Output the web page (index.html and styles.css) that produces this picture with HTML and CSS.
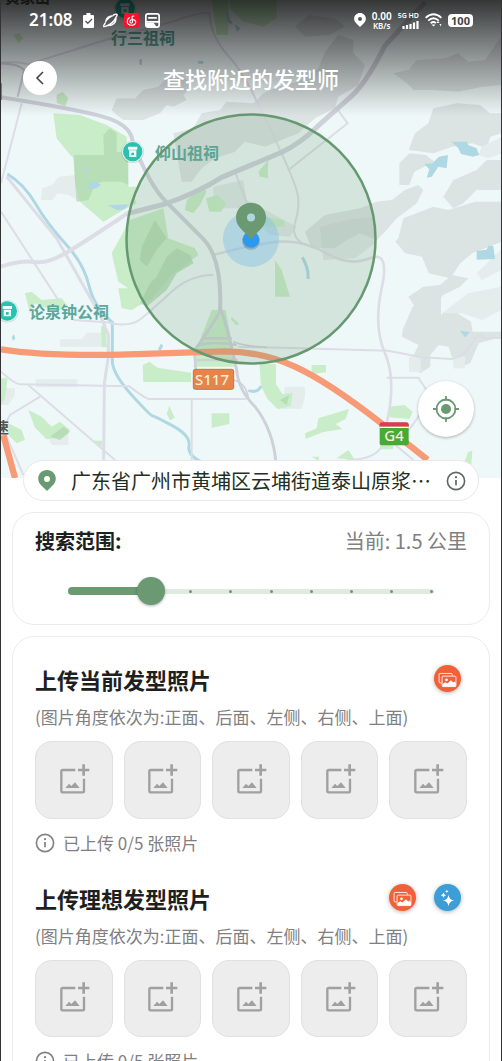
FILE: index.html
```html
<!DOCTYPE html>
<html lang="zh-CN">
<head>
    <meta charset="UTF-8">
    <meta name="viewport" content="width=device-width, initial-scale=1">
    <title>查找附近的发型师</title>
    <link rel="stylesheet" href="styles.css">
</head>
<body>
    <!-- 公用图标 -->
    <svg class="symbols" aria-hidden="true">
        <symbol id="icon-info" viewBox="0 0 20 20">
            <circle cx="10" cy="10" r="8.6" fill="none" stroke="currentColor" stroke-width="1.6"/>
            <path d="M10 9v5.2" stroke="currentColor" stroke-width="1.7"/>
            <circle cx="10" cy="6.2" r="1.1" fill="currentColor"/>
        </symbol>
        <symbol id="icon-pin" viewBox="0 0 18 21">
            <path fill-rule="evenodd" fill="currentColor" d="M9 0C4 0 .2 3.8 .2 8.6c0 2.400 1 4.500 2.700 6.300L9 21l6.100-6.100c1.700-1.800 2.700-3.900 2.700-6.300C17.800 3.800 14 0 9 0zm0 6a3 3 0 1 1 0 6 3 3 0 0 1 0-6z"/>
        </symbol>
        <symbol id="icon-add" viewBox="0 0 96 96">
            <path d="M52 18H14q-4 0-4 4v59q0 4 4 4h60q4 0 4-4V44" fill="none" stroke="currentColor" stroke-width="7"/>
            <path d="M77 1v34M60 18h34" stroke="currentColor" stroke-width="8"/>
            <path d="M22 72l11-13 7 7 11-11 14 17z" fill="currentColor"/>
        </symbol>
        <symbol id="icon-gallery" viewBox="0 0 80 80">
            <path d="M23 53h-5q-3 0-3-3V28q0-3 3-3h33q3 0 3 3v4" fill="none" stroke="#fff" stroke-width="2.500"/>
            <rect x="24" y="33" width="41" height="31" rx="3" fill="none" stroke="#fff" stroke-width="2.500"/>
            <circle cx="37" cy="44" r="4" fill="#fff"/>
            <path d="M25 64V57l8-6 7 4 10-10 7 7 4-3 4 5v8q0 2-2 2z" fill="#fff"/>
        </symbol>
        <symbol id="icon-sparkle" viewBox="0 0 80 80">
            <path fill="#fff" d="M43 32q2 15 17 17q-15 2-17 17q-2-15-17-17q15-2 17-17zM28 25q1 7 8 8q-7 1-8 8q-1-7-8-8q7-1 8-8zM38 17q1 4 5 5q-4 1-5 5q-1-4-5-5q4-1 5-5z"/>
        </symbol>
        <symbol id="icon-temple" viewBox="0 0 70 70">
            <circle cx="35" cy="36" r="34" fill="#000" opacity=".12"/>
            <circle cx="35" cy="35" r="32" fill="#d9f3ef"/>
            <circle cx="35" cy="35" r="29" fill="#2cc0ae"/>
            <path fill-rule="evenodd" d="M21 20h28v9H21zM24 31h22v20H24zM31 38v8h8v-8z" fill="#f2fffc"/>
        </symbol>
    </svg>

    <div class="app">
        <section class="map">
            <svg class="map-canvas" viewBox="1 0 500 478" preserveAspectRatio="xMidYMin slice" role="img" aria-label="地图">
                <rect width="502" height="478" fill="#eff8f8"/>
                <g transform="scale(.333333)">
                    <!-- 山地 -->
                    <g fill="#dce3e3">
                        <path d="M335 330l15-35 55 0 25-25 45-10 25-25h55l20 25-25 25 10 15-40 20-20-5-20 25-50 20-60 0-20-15z"/>
                        <path d="M520 400l60-15 25-45 55-10 20-25 80 5 30-30 45-20 60-15 60-40 20-50 40-50 45 15 0 40 35 35-20 60-60 35-10 35-60 30-50 45-100 40-60-15-30 30-60 20-40 30-30 40-30 0-10-60z"/>
                        <path d="M885 80l40-35 80 10 30 25-50 25-70 5z"/>
                        <path d="M1180 220l45-10 25-30 85-5 40-15 30 25 50-5 45-65h6v140l-60 5-70 15-80-5-55 0-20-20z"/>
                        <path d="M1245 400l40-30 15-45 70-15 70 5 30 25h36v60l-35 10-10 35-45-15-60 10-55 20-75-10z"/>
                        <path d="M1198 490l30-30 50 5 25 20-30 15-30 15-15 40h-30zM1330 590l30-50 70-30 30-30h46v90l-76 0-40 40-30 15z"/>
                        <path d="M1080 625l50-20 45-5 40-30 40-15 15 15-20 40-60 45-30 35-30 30-50-20-40 20-35 25-70 0-20-50 60-50z"/>
                        <path d="M1145 770l50-55 15-60 90-35 45 10 80-25 81 0v120l-90 35-35 30-30 45-65-15-20-50-50-10-30-35z"/>
                        <path d="M1225 890l45-30 50-5 35-30 50 10-25 25-50 25-35 35-45 10zM1208 990l30-70 60-30 25 0 0 55 25-20 65 40 5 30 88 0v15l-70 20-25 60-45 15-20-65-30-5-25 30 0 35-30 20-35-25 30-60-50-25z"/>
                    </g>
                    <g fill="#e4ecec">
                        <path d="M122 600l5-35 30-10 20-25 50-5 5 75-25-15-35-5-15 20z"/>
                        <path d="M1445 440l61-30v50l-40 15-30-10z"/>
                        <path d="M1430 820l76-75v65l-60 30zM1325 940l80-60 101-20v70l-60 30-60-20z"/>
                        <path d="M180 1018h65l15-20h45v42H180zM107 1138h125v24H107zM5 1165h40v20l-20 30H5zM145 1310l60-20v45l-50 0zM855 1160h60v30l-10 36h-60z"/>
                        <path d="M1227 1070h35v45h-35zM1360 1070h35v35h-35z"/>
                    </g>
                    <path d="M960 680l80-20 85-10v80l-60 45-95 5zM640 560l90-20 10 60 150 80-20 30-60-5-90-80-80 0z" fill="#c9d1d1" opacity=".4"/>
                    <!-- 绿地 -->
                    <g fill="#c8edc8">
                        <path d="M160 340l80 5 80 30 60 35 5 150 25 0-10 30 10 20-40 20-60 35-70-60-15-60-5-70-30-35-20-25z"/>
                        <path d="M390 660l70-25 30-10 15 90 80 30 10 20-80 60-60 70-60 35-30-5-10-60 30 0-30-20-20-85z"/>
                        <path d="M560 600l50-40 10 15-20 40-20 25-25-10zM618 595l35-10 25 25-15 25-35 0zM775 515l30-35-2 40 2 15-25-5zM825 780l20 30 25 80h-45z"/>
                        <path d="M790 650l60 10 5 20-60 0zM695 950l22 22-8 4-16-18z"/>
                        <path d="M635 930h42l32 170H580l20-80z"/>
                        <path d="M75 880l20-5 30 25 60-5 20 25-40 15-60-25-15 30zM303 980l15-8 2 70h-15zM428 1095l20-10 25 18 100 15v28H430zM635 1240h53v32l-53 12zM508 1218l16 35-14 8-10-20zM85 1230l40 20 30 30 25-15 30 25-20 20-50 8-35-35zM25 1270l40 20 10 30-25 10-25-25zM278 1322h28v18z"/>
                        <path d="M778 1090l50 3 0 60 20 30 30-5-5 40-40 10-30-30-20-40zM935 1095h43v22l-43 5zM915 1300l35-15 5-30 92-28-10 30-30 15 20 15-60 10-50 20zM1168 1220l45-5 25 20-10 22-60-5zM1010 1375l35-25 20 30zM1395 1380l10-25 12-2-3 40-20 5zM1140 1330h40v18h-40zM935 1370h22v14zM3 1135l20 0-8 60-12 20z"/>
                        <path d="M170 285l18-10 17 20-10 25-25-12zM40 105l18-5 12 15-15 15zM635 0h50v105h-35zM690 0h140l0 55-40 25-60-15-40-40z"/>
                    </g>
                    <g fill="#b2d8b2" opacity=".75">
                        <path d="M222 465h90l-2-60 20-20 20 15v55l35 5v95l-20-10-60 0-20 10-20 45-35 5-5-60zM425 740l40-80 35 55-30 35-30 50-20-20zM500 770l30-25 40 20 10 25-50 30-30 50-60 50-20-10 30-60 20-20z"/>
                        <path d="M150 1310l40-30 20 15-30 25zM840 1200l28-15-8 30z"/>
                    </g>
                    <!-- 水系 -->
                    <path fill="#afd8e4" d="M1355 425l45 0 5 10 25 10 8 20-20 5-35-8-8-17zM1272 492l25-2 20-20 27-5-4 40-25-5-20 30-15 3 8-25zM1430 752l30-3 5-12 15 0 5 40-55 2zM265 552l20-8 18 10-12 10-25 5zM322 616l65-3-15 15-20 3zM250 505l12 0 4 12-12 0zM1380 992l30 5-15 15zM705 72l16 12-10 12zM418 178h8v16h-8zM595 183h15v8h-15zM36 1010l6-8 4 14-8 6z"/>
                    <g fill="none" stroke="#afd8e4">
                        <path d="M22 522q50 30 85 90t90 120 70 125 70 110v120q5 40 60 100t60 60 60 30 50 60 40 50" stroke-width="9"/>
                        <path d="M907 772q20 35 17 65M745 1172q30 8 38-14M478 1050l8-16M682 40l3 20 10 10" stroke-width="9"/>
                    </g>
                    <!-- 道路 -->
                    <g fill="none" stroke="#dcdde6" stroke-width="6">
                        <path d="M3 188q45-5 80 5l240-75 200-55q80-30 105-23 5 70 55 125t90 145"/>
                        <path d="M773 310q40 80 72 150t45 110-5 100 70 75"/>
                        <path d="M3 800q60-20 100-14t100-30 185-120" stroke-width="12"/>
                        <path d="M20 530l150 185 130 230 25 60v65l-12 80-2 230" stroke-width="9"/>
                        <path d="M3 635l175 270M65 310L3 550M705 515l60 160M865 510l178-140-28-38"/>
                        <path d="M640 765q130-35 200-40t140 35 130 15 35 90 10 195 5 210" stroke-width="8"/>
                        <path d="M640 825q-70 0-125 50t-90 80-105 12l-100-7"/>
                        <path d="M3 1115q45 40 60 38l325 6q50 38 60 38h290M575 1195v185M85 1155l260 225M120 1190l-90 55-30 60M715 1040l450 12 100 20 90 5q35-5 60-45t40-18h50M1160 1133h95l40 60-70 100"/>
                        <path d="M20 1310l50 115"/>
                        <path d="M1150 1330q-20 50-110 50M1180 1330l60 50"/>
                    </g>
                    <g fill="none" stroke="#cfd1da" stroke-width="12">
                        <path d="M3 292q220 35 305 58t90 75q50 130 100 180t110 110 52 220"/>
                        <path d="M385 640l110-28q100-35 170-80l180-75q60-30 110-80l90-80q50-40 110-160l120-130" stroke-width="15"/>
                        <path d="M660 935q-55 90-80 120M660 920q25 70 50 190 5 60 55 110 55 70 63 170" stroke-width="9"/>
                        <path d="M610 1015h85M595 1035q50-12 115 0M582 1080h130M583 1055l5 60" stroke-width="8"/>
                        <path d="M3 190q50 0 70 20l-20 80" stroke-width="7"/>
                        <path d="M700 1025q40 15 100 17M700 1140q40 10 45 55" stroke-width="5"/>
                    </g>
                    <path d="M3 1048q120 20 360 16 160-5 310-10 110 0 210 45t260 170l140 110M10 1305l35 129" fill="none" stroke="#f79a75" stroke-width="19"/>
                    <path d="M3 250v50" stroke="#e05a4f" stroke-width="5"/>
                    <use href="#icon-temple" x="363" y="420" width="70" height="70"/>
                    <use href="#icon-temple" x="-13" y="898" width="70" height="70"/>
                    <use href="#icon-temple" x="340" y="-10" width="70" height="70"/>
                    <!-- 路牌 -->
                    <rect x="580" y="1108" width="121" height="60" rx="6" fill="#e5854a" stroke="#d36f2d" stroke-width="3"/>
                    <rect x="1139" y="1268" width="87" height="68" rx="6" fill="#48a934"/>
                    <path d="M1139 1280v-6q0-7 7-7h73q7 0 7 7v6z" fill="#dd3b4f"/>
                    <path d="M1139 1282h87" stroke="#fff" stroke-width="4"/>
                </g>
                <g class="map-label">
                    <text x="111" y="44">行三祖祠</text>
                    <text x="155" y="159">仰山祖祠</text>
                    <text x="29" y="318">论泉钟公祠</text>
                </g>
                <g class="map-place">
                    <text x="5" y="3">黄家山</text>
                    <text x="-6" y="433">速</text>
                </g>
                <g class="map-sign">
                    <text x="212" y="385">S117</text>
                    <text x="394" y="441">G4</text>
                </g>
                <!-- 搜索范围圈 -->
                <circle cx="251" cy="239" r="124.500" fill="#6a9972" fill-opacity=".2" stroke="#669970" stroke-width="2.500"/>
                <circle cx="251" cy="239" r="28" fill="#84c2e6" fill-opacity=".45"/>
                <circle cx="251" cy="241" r="9" fill="#33434a" opacity=".25"/>
                <circle cx="251" cy="239.500" r="8.300" fill="#2c98f0"/>
                <path d="M251 202.700c-8.500 0-15 6.500-15 14.800 0 9 7 12.500 15 22 8-9.500 15-13 15-22 0-8.300-6.500-14.800-15-14.800z" fill="#6a9972"/>
                <circle cx="251" cy="217.500" r="4" fill="#afd5e0"/>
            </svg>

            <header class="top">
                <div class="status">
                    <span class="status-time">21:08</span>
                    <svg class="status-task" viewBox="0 0 11 15"><path d="M1 2h2.500V0h4v2H10q1 0 1 1v11q0 1-1 1H1q-1 0-1-1V3q0-1 1-1z" fill="#fff"/><path d="M2.500 8l2.300 2.300L9 6" fill="none" stroke="#555" stroke-width="1.300"/></svg>
                    <svg class="status-app" viewBox="0 0 15 15"><path d="M2.200 10.500C1.500 6 4.500 2.500 9 2.200L12 2.600C7.500 4 4.500 6.500 2.200 10.500z" fill="#fff"/><path d="M2.300 10C-.5 14 .3 14.600 4.300 12.600M10 2.200C14 .3 15.300 1 12.900 4.600M12.900 4.600C13.500 9.500 10 13 4.300 12.600C8 11 11 8.500 12.900 4.600z" fill="none" stroke="#fff" stroke-width="1.400"/></svg>
                    <svg class="status-app" viewBox="0 0 14 14"><rect width="14" height="14" rx="2" fill="#f0142f"/><path d="M9.500 3Q7.500 2.500 7.500 4L8 8Q8 9.500 6.800 9.500T5.500 8Q5.500 6 8 6 11 6.200 11 8.500 10.500 11.500 7 11.500 3 11.300 3 7.800 3.200 5 5.500 4" fill="none" stroke="#fff" stroke-width="1"/></svg>
                    <svg class="status-app" viewBox="0 0 14 14"><rect x=".8" y=".8" width="12.400" height="12.400" rx="2" fill="none" stroke="#fff" stroke-width="1.600"/><path d="M3 4.500h8M1 8.300h12" stroke="#fff" stroke-width="1.500"/><path d="M1 9h7l3 4H1z" fill="#fff"/></svg>
                    <svg class="status-gps" viewBox="0 0 18 21"><use href="#icon-pin"/></svg>
                    <span class="status-speed"><b>0.00</b><span>KB/s</span></span>
                    <span class="status-signal">
                        <span>5G HD</span>
                        <svg viewBox="0 0 17 8"><path d="M1.500 8V5M5 8V4M8.500 8V3M12 8V1.500M15.500 8V0" stroke="#fff" stroke-width="2.200"/></svg>
                    </span>
                    <svg class="status-wifi" viewBox="0 0 17 14"><g fill="none" stroke="#fff" stroke-width="1.800"><path d="M.6 4.800Q8.500-2.200 16.400 4.800M3.200 7.600Q8.500 3 13.800 7.600M5.700 10.200q2.800-2.300 5.200 0"/></g><path d="M6.500 11.500h4l-2 2zM13 8l1.500 2h-3zM14.500 11h2l-1 2.500z" fill="#fff"/></svg>
                    <span class="status-battery">100</span>
                </div>
                <div class="nav">
                    <button class="back" type="button" aria-label="返回">
                        <svg viewBox="0 0 16 16"><path d="M11 2L5 8l6 6" fill="none" stroke="#444" stroke-width="1.600"/></svg>
                    </button>
                    <h1>查找附近的发型师</h1>
                </div>
            </header>

            <button class="locate" type="button" aria-label="定位">
                <svg viewBox="0 0 26 26"><g fill="none" stroke="#6a9972" stroke-width="1.800"><circle cx="13" cy="13" r="9.500"/><path d="M13 0v4.500M13 21.500V26M0 13h4.500M21.500 13H26"/></g><circle cx="13" cy="13" r="5" fill="#6a9972"/></svg>
            </button>
        </section>

        <main>
            <div class="address">
                <svg class="address-pin"><use href="#icon-pin"/></svg>
                <span class="address-text">广东省广州市黄埔区云埔街道泰山原浆…</span>
                <button class="address-info" type="button" aria-label="详情"><svg class="info"><use href="#icon-info"/></svg></button>
            </div>

            <section class="card range">
                <div class="range-head">
                    <label for="range">搜索范围:</label>
                    <output for="range">当前: 1.5 公里</output>
                </div>
                <div class="slider">
                    <div class="slider-track"></div>
                    <div class="slider-ticks"><i></i><i></i><i></i><i></i><i></i><i></i><i></i><i></i><i></i><i></i></div>
                    <div class="slider-fill"><div style="width:22.22%"></div></div>
                    <input id="range" type="range" min="0.5" max="5" step="0.5" value="1.5">
                </div>
            </section>

            <section class="card photos">
                <div class="upload">
                    <div class="upload-head">
                        <h2>上传当前发型照片</h2>
                        <button class="round" type="button" aria-label="相册"><svg><use href="#icon-gallery"/></svg></button>
                    </div>
                    <p class="upload-tip">(图片角度依次为:正面、后面、左侧、右侧、上面)</p>
                    <div class="tiles">
                        <button class="tile" type="button" aria-label="正面"><svg><use href="#icon-add"/></svg></button>
                        <button class="tile" type="button" aria-label="后面"><svg><use href="#icon-add"/></svg></button>
                        <button class="tile" type="button" aria-label="左侧"><svg><use href="#icon-add"/></svg></button>
                        <button class="tile" type="button" aria-label="右侧"><svg><use href="#icon-add"/></svg></button>
                        <button class="tile" type="button" aria-label="上面"><svg><use href="#icon-add"/></svg></button>
                    </div>
                    <p class="upload-count"><svg class="info"><use href="#icon-info"/></svg>已上传 0/5 张照片</p>
                </div>

                <div class="upload">
                    <div class="upload-head">
                        <h2>上传理想发型照片</h2>
                        <button class="round" type="button" aria-label="相册"><svg><use href="#icon-gallery"/></svg></button>
                        <button class="round round-blue" type="button" aria-label="智能生成"><svg><use href="#icon-sparkle"/></svg></button>
                    </div>
                    <p class="upload-tip">(图片角度依次为:正面、后面、左侧、右侧、上面)</p>
                    <div class="tiles">
                        <button class="tile" type="button" aria-label="正面"><svg><use href="#icon-add"/></svg></button>
                        <button class="tile" type="button" aria-label="后面"><svg><use href="#icon-add"/></svg></button>
                        <button class="tile" type="button" aria-label="左侧"><svg><use href="#icon-add"/></svg></button>
                        <button class="tile" type="button" aria-label="右侧"><svg><use href="#icon-add"/></svg></button>
                        <button class="tile" type="button" aria-label="上面"><svg><use href="#icon-add"/></svg></button>
                    </div>
                    <p class="upload-count"><svg class="info"><use href="#icon-info"/></svg>已上传 0/5 张照片</p>
                </div>
            </section>
        </main>
    </div>
</body>
</html>
```

FILE: styles.css
```css
*{
    box-sizing: border-box;
}
body{
    margin: 0;
    background: #fff;
    color: #1d211e;
    font-family: "Noto Sans CJK SC", sans-serif;
}
h1, h2, p{
    margin: 0;
}
button{
    padding: 0;
    border: 0;
    background: none;
    color: inherit;
    font: inherit;
    cursor: pointer;
}
svg{
    display: block;
}
.symbols{
    position: absolute;
    width: 0;
    height: 0;
}
.app{
    height: 100vh;
    overflow-y: auto;
    scrollbar-width: none;
    border: solid #333;
    border-width: 0 1px;
}

/* 地图 */
.map{
    position: relative;
    height: 478px;
    overflow: hidden;
}
.map-canvas{
    width: 100%;
    height: 100%;
}
.map-label{
    font-size: 16px;
    font-weight: 700;
    fill: #5ba79c;
}
.map-place{
    font-size: 15px;
    font-weight: 700;
    fill: #555;
}
.map-sign{
    font-family: "Noto Sans", sans-serif;
    font-size: 15px;
    font-weight: 500;
    text-anchor: middle;
    fill: #f8eedd;
}
.top{
    position: absolute;
    top: 0;
    left: 0;
    right: 0;
    height: 116px;
    background: linear-gradient(rgba(0,0,0,.78), rgba(0,0,0,0));
    color: #fff;
}
.status{
    display: flex;
    align-items: center;
    height: 40px;
    padding: 0 28px;
    gap: 6px;
    font-family: "Noto Sans", sans-serif;
    font-weight: 600;
}
.status-time{
    margin-right: 4px;
    font-size: 17px;
    line-height: 20px;
}
.status-task{
    width: 11px;
    height: 15px;
    margin-right: 3px;
}
.status-app{
    width: 15px;
    height: 15px;
}
.status-gps{
    width: 12px;
    height: 14px;
    margin-left: auto;
}
.status-speed, .status-signal{
    display: flex;
    flex-direction: column;
    align-items: center;
    font-size: 8px;
    line-height: 8px;
}
.status-speed{
    gap: 1px;
}
.status-speed b{
    font-size: 10px;
    font-weight: 600;
    line-height: 10px;
}
.status-signal{
    align-items: flex-end;
    gap: 1px;
    font-size: 7px;
}
.status-signal svg{
    width: 17px;
    height: 8px;
}
.status-wifi{
    width: 17px;
    height: 14px;
}
.status-battery{
    width: 25px;
    border-radius: 4px;
    background: #fff;
    color: #444;
    font-size: 11px;
    font-weight: 700;
    line-height: 13px;
    text-align: center;
}
.nav{
    display: grid;
    grid-template-columns: 34px 1fr 34px;
    align-items: center;
    padding: 0 22px;
    margin-top: 21px;
}
.nav h1{
    font-size: 22px;
    font-weight: 500;
    line-height: 34px;
    text-align: center;
}
.back{
    display: grid;
    place-items: center;
    height: 34px;
    border-radius: 50%;
    background: #fff;
}
.back svg{
    width: 16px;
    height: 16px;
}
.locate{
    position: absolute;
    right: 27px;
    bottom: 41px;
    display: grid;
    place-items: center;
    width: 56px;
    height: 56px;
    border-radius: 50%;
    background: #fff;
    box-shadow: 0 1px 3px rgba(0,0,0,.3);
}
.locate svg{
    width: 26px;
    height: 26px;
}

/* 地址栏 */
main{
    padding: 0 11px 24px;
}
.address{
    position: relative;
    display: flex;
    align-items: center;
    height: 41px;
    margin: -18px 11px 11px;
    padding: 0 12px 0 14px;
    border: 1px solid #e8e8e8;
    border-radius: 21px;
    background: #fff;
}
.address-pin{
    flex: none;
    width: 18px;
    height: 21px;
    color: #6a9972;
}
.address-text{
    flex: 1;
    min-width: 0;
    margin-left: 15px;
    overflow: hidden;
    white-space: nowrap;
    font-size: 20px;
    line-height: 28px;
    color: #1f3024;
}
.address-info{
    flex: none;
    color: #5f6661;
}
.info{
    flex: none;
    width: 20px;
    height: 20px;
}

/* 卡片 */
.card{
    margin-bottom: 11px;
    border: 1px solid #ececec;
    border-radius: 22px;
    background: #fff;
}
.range{
    padding: 14px 22px 19px;
}
.range-head{
    display: flex;
    justify-content: space-between;
    margin-bottom: 22px;
    font-size: 20px;
    line-height: 28px;
}
.range-head label{
    font-weight: 700;
}
.range-head output{
    color: #808080;
}
.slider{
    display: grid;
    align-items: center;
    margin: 0 22px;
}
.slider > *{
    grid-area: 1 / 1;
}
.slider-track{
    height: 5px;
    margin: 0 11px;
    border-radius: 3px;
    background: #dfeae1;
}
.slider-ticks{
    display: flex;
    justify-content: space-between;
    margin: 0 12px;
}
.slider-ticks i{
    width: 3px;
    height: 3px;
    border-radius: 50%;
    background: #6a9972;
}
.slider-fill{
    margin: 0 14px 0 11px;
}
.slider-fill div{
    height: 8px;
    border-radius: 4px;
    background: #6a9972;
}
.slider input{
    -webkit-appearance: none;
    appearance: none;
    width: 100%;
    height: 28px;
    margin: 0;
    background: none;
}
.slider input::-webkit-slider-thumb{
    -webkit-appearance: none;
    width: 28px;
    height: 28px;
    border-radius: 50%;
    background: #6a9972;
    box-shadow: 0 1px 3px rgba(0,0,0,.3);
}

/* 上传照片 */
.photos{
    padding: 28px 22px;
}
.upload{
    margin-bottom: 29px;
}
.upload-head{
    display: flex;
    align-items: flex-start;
    gap: 18px;
    padding-right: 6px;
}
.upload-head h2{
    flex: 1;
    font-size: 22px;
    font-weight: 700;
    line-height: 28px;
}
.round{
    width: 27px;
    height: 27px;
    border-radius: 50%;
    background: #f16036;
    box-shadow: 0 1px 4px rgba(0,0,0,.3);
}
.round-blue{
    background: #3c9dd7;
}
.round svg{
    width: 27px;
    height: 27px;
}
.upload-tip{
    margin: 12px 0;
    font-size: 17px;
    line-height: 24px;
    color: #808080;
}
.tiles{
    display: grid;
    grid-template-columns: repeat(5, 1fr);
    gap: 11px;
}
.tile{
    display: grid;
    place-items: center;
    aspect-ratio: 1;
    border: 1px solid #e0e0e0;
    border-radius: 17px;
    background: #ededed;
    color: #a0a0a0;
}
.tile svg{
    width: 32px;
    height: 32px;
}
.upload-count{
    display: flex;
    align-items: center;
    gap: 8px;
    margin-top: 12px;
    font-size: 17px;
    line-height: 24px;
    color: #808080;
}
```
